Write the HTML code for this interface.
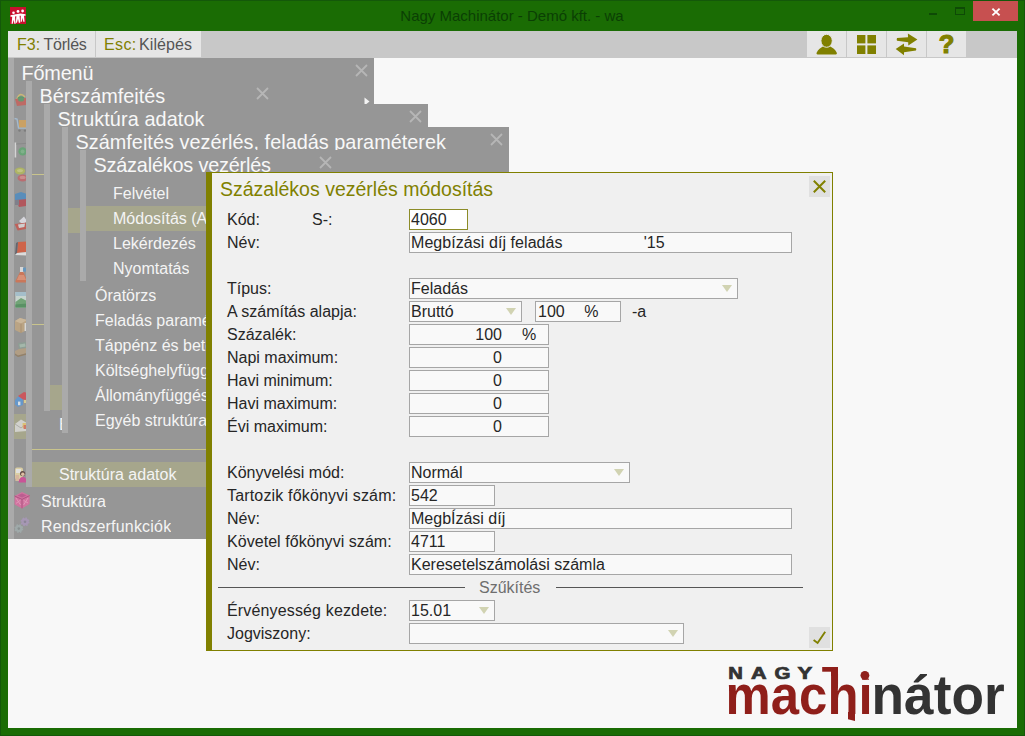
<!DOCTYPE html>
<html lang="hu">
<head>
<meta charset="utf-8">
<title>Nagy Machinátor - Demó kft. - wa</title>
<style>
*{box-sizing:border-box;margin:0;padding:0}
html,body{width:1025px;height:736px;overflow:hidden}
body{position:relative;background:#1a6c04;font-family:"Liberation Sans",Arial,sans-serif;font-size:16px;color:#262626}
.abs{position:absolute}
#frame{position:absolute;left:0;top:0;width:1025px;height:736px;border:1px solid #14580a;}
#client{position:absolute;left:8px;top:31px;width:1009px;height:697px;background:#f8f8f8}
#toolbar{position:absolute;left:0;top:0;width:1009px;height:27px;background:#c8c8c8}
.tbtn{position:absolute;top:0;height:26px;background:#e6e6e6;line-height:27px;white-space:nowrap;color:#555}
.tbtn b{font-weight:normal;color:#808000}
.panel{position:absolute;background:#969696}
.stripe{position:absolute;left:0;top:0;width:6px;background:#aaaaaa}
.ptitle{position:absolute;top:4px;margin-left:-0.5px;font-size:19.85px;line-height:23px;color:#f8f8f8;white-space:nowrap}
.mi{position:absolute;height:25px;line-height:25px;color:#f4f4f4;white-space:nowrap;overflow:hidden}
.hl{background:#a6a68c}
.px{position:absolute;width:13px;height:13px}
.sep{position:absolute;height:1px;background:#c9c48c}
#dlg{position:absolute;left:198px;top:141px;width:627px;height:479px;background:#f0f0f0;border:1px solid #808000;border-left:6px solid #808000}
.lbl{position:absolute;left:21px;height:21px;line-height:21px;white-space:nowrap}
.fld{position:absolute;height:21px;line-height:19px;border:1px solid #a6a6a6;background:#f9f9f9;padding-left:1px;white-space:pre;overflow:hidden}
.arr{position:absolute;width:0;height:0;border-left:5.5px solid transparent;border-right:5.5px solid transparent;border-top:7px solid #d1d3b2}
</style>
</head>
<body>
<div id="frame"></div>
<!-- title bar -->
<svg class="abs" style="left:10px;top:7px" width="16" height="17" viewBox="0 0 16 17">
<rect width="16" height="17" fill="#c8102e"/>
<g fill="#fff" transform="translate(0,0.8)"><circle cx="3.5" cy="5" r="1.3"/><circle cx="8" cy="3.6" r="1.4"/><circle cx="12.6" cy="3.2" r="1.4"/>
<path d="M0.5 7.5 L6 6.5 L10.5 5.6 L15.5 6.5 L15.5 8 L14 8 L14.6 14 L13.3 14 L12.6 10 L11.8 14 L10.6 14 L10.8 8 L9.6 8 L10.2 15 L8.8 15 L8 11 L7 15 L5.8 15 L6.4 8.4 L5 8.8 L5.6 16 L4.4 16 L3.6 12 L2.8 16 L1.6 16 L2.2 9 L0.5 9 Z"/></g>
</svg>
<div class="abs" id="wtitle" style="left:399px;top:4px;width:226px;height:24px;line-height:24px;font-size:15px;color:#0b3f04;white-space:nowrap;text-align:center">Nagy Machinátor - Demó kft. - wa</div>
<div class="abs" style="left:929px;top:13px;width:8px;height:2px;background:#0e4a06"></div>
<div class="abs" style="left:955px;top:7px;width:10px;height:8px;border:1px solid #0e4a06;border-top-width:2px"></div>
<div class="abs" style="left:973px;top:1px;width:45px;height:20px;background:#c75050"></div>
<svg class="abs" style="left:991px;top:7px" width="10" height="10" viewBox="0 0 10 10"><path d="M1.4 1.6 L8.6 8.4 M8.6 1.6 L1.4 8.4" stroke="#fff" stroke-width="1.9" fill="none"/></svg>

<div id="client">
 <div id="toolbar">
  <div class="tbtn" style="left:0;width:87px;padding-left:9px"><b>F3:</b> <span style="margin-left:-1px;letter-spacing:-0.25px">Törlés</span></div>
  <div class="tbtn" style="left:88px;width:105px;padding-left:8px"><b style="letter-spacing:0.4px">Esc:</b> <span style="margin-left:-2.2px;letter-spacing:0.1px">Kilépés</span></div>
  <div class="tbtn" style="left:799px;width:39px"></div>
  <div class="tbtn" style="left:839px;width:39px"></div>
  <div class="tbtn" style="left:879px;width:39px"></div>
  <div class="tbtn" style="left:919px;width:39px"></div>
  <!-- user -->
  <svg class="abs" style="left:808px;top:3px" width="22" height="21" viewBox="0 0 22 21"><path d="M1.6 20.4 Q0 20.4 0.6 18.8 C2 15 5 13.4 7 12.4 L14.2 12.4 C16.4 13.4 19.4 15 20.8 18.8 Q21.4 20.4 19.8 20.4 Z" fill="#808000"/><ellipse cx="10.6" cy="6.8" rx="5.7" ry="6.5" fill="#808000" stroke="#e6e6e6" stroke-width="1"/></svg>
  <!-- grid -->
  <svg class="abs" style="left:849px;top:4px" width="19" height="19" viewBox="0 0 19 19"><g fill="#808000"><rect x="0" y="0" width="8.4" height="8.4"/><rect x="10.4" y="0" width="8.6" height="8.4"/><rect x="0" y="10.4" width="8.4" height="8.6"/><rect x="10.4" y="10.4" width="8.6" height="8.6"/></g></svg>
  <!-- arrows -->
  <svg class="abs" style="left:886px;top:2px" width="25" height="24" viewBox="0 0 25 24"><g fill="#808000"><path d="M3 5 Q2.4 6.4 3 7.8 L14.2 9.2 L14.3 12.4 L23.4 6.4 L13.9 0.4 L14 4.2 Z"/><path d="M22 15.2 Q22.6 16.3 22 17.4 L10 19.2 L10 22.2 L1.7 16.1 L10 10.5 L10 13.6 Z"/></g></svg>
  <div class="abs" style="left:919px;top:0;width:39px;height:27px;line-height:27px;text-align:center;font-weight:bold;font-size:25.5px;color:#808000;-webkit-text-stroke:1.2px #808000">?</div>
 </div>

 <!-- MENUS -->
 <div class="panel" id="p0" style="left:0;top:27px;width:366px;height:481px">
  <div class="stripe" style="height:481px"></div>
  <div class="ptitle" style="left:14px;letter-spacing:-0.15px">Főmenü</div>
  <svg class="px" style="left:347px;top:6px" viewBox="0 0 13 13"><path d="M1 1 L12 12 M12 1 L1 12" stroke="#b6b6b6" stroke-width="1.8" fill="none"/></svg>
  <div class="mi hl" style="left:6px;top:356px;width:12px"></div>
  <svg class="abs" style="left:6px;top:33px;opacity:0.8" width="16" height="18" viewBox="0 0 16 18"><path d="M3 8 Q6 0 11 6" stroke="#d8c070" stroke-width="1.6" fill="none"/><ellipse cx="7" cy="8" rx="3.6" ry="2.8" fill="#4f9a62"/><path d="M1 8 L13 7 L12 14 L3 15 Z" fill="#c8605a"/><ellipse cx="7" cy="8.4" rx="3" ry="2" fill="#5a9a6a"/></svg>
  <svg class="abs" style="left:6px;top:58px;opacity:0.8" width="16" height="18" viewBox="0 0 16 18"><path d="M0.5 2.5 L3 3 L4.5 12 L12 12" stroke="#a8c4dc" stroke-width="1.4" fill="none"/><rect x="5" y="4" width="8" height="7.4" fill="#d8a458"/><circle cx="5.5" cy="14.6" r="1.2" fill="#777"/><circle cx="11" cy="14.6" r="1.2" fill="#777"/></svg>
  <svg class="abs" style="left:6px;top:83px;opacity:0.8" width="16" height="18" viewBox="0 0 16 18"><rect x="0.6" y="1.5" width="1.6" height="15" fill="#e4e4e4"/><path d="M2 3 L12 2.4" stroke="#888" stroke-width="1"/><circle cx="8.6" cy="10.4" r="4.2" fill="#5fa870"/><circle cx="8.6" cy="10.4" r="2" fill="#7ab888"/></svg>
  <svg class="abs" style="left:6px;top:108px;opacity:0.8" width="16" height="18" viewBox="0 0 16 18"><ellipse cx="6" cy="5" rx="5.2" ry="3.4" fill="#b4bc58"/><ellipse cx="6" cy="4.6" rx="3" ry="1.6" fill="#ccd080"/><ellipse cx="8.6" cy="12" rx="5" ry="3.6" fill="#c46468"/><ellipse cx="8.6" cy="11.4" rx="3" ry="1.6" fill="#d88c8c"/></svg>
  <svg class="abs" style="left:6px;top:133px;opacity:0.8" width="16" height="18" viewBox="0 0 16 18"><path d="M1 3 L7 1 L13 3 L13 9 L1 9 Z" fill="#4a8cc4"/><path d="M2 9 L13 8 L12 15 L5 16 Z" fill="#b84850"/><rect x="1" y="9" width="4" height="5" fill="#7a7a88"/></svg>
  <svg class="abs" style="left:6px;top:158px;opacity:0.8" width="16" height="18" viewBox="0 0 16 18"><path d="M5 5 L10 0.6 L13 5 L9 9 Z" fill="#e6e6ee"/><path d="M0.6 8 L13 6.4 L12 13 L3.6 14.6 Z" fill="#c8544c"/><path d="M4 8.6 L11 7.6 L10.4 11 L5 12 Z" fill="#ddd"/></svg>
  <svg class="abs" style="left:6px;top:183px;opacity:0.8" width="16" height="18" viewBox="0 0 16 18"><path d="M4 1 L13 0.6 L13 11 L3 12 Z" fill="#dc5838"/><path d="M2 2 L4 1 L3 12 L1 14 Z" fill="#5a5a64"/><path d="M1 14 L3 12 L13 11 L13 14.6 Z" fill="#eee"/></svg>
  <svg class="abs" style="left:6px;top:208px;opacity:0.8" width="16" height="18" viewBox="0 0 16 18"><rect x="6" y="1" width="3.4" height="7" fill="#e8e8e8"/><rect x="9" y="1.6" width="3.4" height="4" fill="#5a98c8"/><path d="M6 6 L9.4 6 L13.4 15 Q13.4 16.4 12 16.4 L2.6 16.4 Q1 16.4 1.4 15 Z" fill="#d8704c"/><path d="M5 9 L10 9 L12 14 L3 14 Z" fill="#e89070"/></svg>
  <svg class="abs" style="left:6px;top:233px;opacity:0.8" width="16" height="18" viewBox="0 0 16 18"><rect x="1.4" y="1" width="11.6" height="15.6" fill="#d4e4dc"/><rect x="1.4" y="1" width="11.6" height="4" fill="#a8c8d8"/><path d="M1.4 11 L7 7 L13 10 L13 16.6 L1.4 16.6 Z" fill="#6aa870"/><path d="M1.4 13.6 L13 12.6 L13 16.6 L1.4 16.6 Z" fill="#4a9058"/></svg>
  <svg class="abs" style="left:6px;top:258px;opacity:0.8" width="16" height="18" viewBox="0 0 16 18"><path d="M1 5 L6 2 L13 4 L13 14 L7 17 L1 14 Z" fill="#c4a880"/><path d="M1 5 L7 7.6 L13 4 L6 2 Z" fill="#d8c09c"/><path d="M7 7.6 L7 17" stroke="#a88c64" stroke-width="0.8"/><rect x="10.6" y="7" width="2.4" height="8" fill="#e8e8e8"/></svg>
  <svg class="abs" style="left:6px;top:283px;opacity:0.8" width="16" height="18" viewBox="0 0 16 18"><path d="M4 2 L12 1 L13 7 L5 8 Z" fill="#8ca094"/><path d="M5.4 3.4 L11 2.6 L11.6 5.6 L6 6.4 Z" fill="#a8c0b0"/><path d="M1 10 L5 8 L13 7 L13 12 L4 14.6 L1 12.6 Z" fill="#b8a080"/><path d="M1 12.6 L4 14.6 L13 12 L13 13.4 L4 16 L1 14 Z" fill="#947c5c"/></svg>
  <svg class="abs" style="left:6px;top:333px;opacity:0.8" width="16" height="18" viewBox="0 0 16 18"><path d="M1 9 L4.6 5 L9 8 L9 14 L4 16 L1 13.6 Z" fill="#5a98d8"/><path d="M4 5 L10 1 L13.4 2 L13 9 L9 8.6 Z" fill="#d84850"/><rect x="4" y="10.6" width="2.4" height="3.6" fill="#e8f0f8"/><rect x="10" y="9" width="3" height="3" fill="#e8d890"/></svg>
  <svg class="abs" style="left:6px;top:358px;opacity:0.8" width="16" height="18" viewBox="0 0 16 18"><path d="M1 8 L7 3.6 L13 7 L13 15 L1 16 Z" fill="#dcdcdc"/><path d="M1 8 L7 12 L13 7" stroke="#aaa" stroke-width="0.9" fill="none"/><rect x="8.6" y="7" width="4.4" height="5" fill="#e8c870"/><rect x="9.6" y="9" width="3.4" height="4" fill="#d87060"/></svg>
  <svg class="abs" style="left:6px;top:408px;opacity:0.8" width="16" height="18" viewBox="0 0 16 18"><rect x="1" y="1.6" width="8" height="12" rx="2" fill="#ecdca8"/><rect x="2" y="3" width="5" height="4" fill="#f4f4f0"/><circle cx="8.6" cy="7.6" r="2.6" fill="#5a3c34"/><circle cx="8.8" cy="8.2" r="1.7" fill="#f0c8a8"/><path d="M4.6 16.6 Q5 11 8.8 11 Q12.6 11 13 16.6 Z" fill="#d84498"/><rect x="1.4" y="9" width="3.6" height="6" fill="#e8c0a0"/></svg>
  <svg class="abs" style="left:6px;top:433px;opacity:0.9" width="16" height="18" viewBox="0 0 16 18"><path d="M0.6 5 L8 1 L15.6 4.6 L15.6 13 L8 17.4 L0.6 13.6 Z" fill="#d870a0"/><path d="M0.6 5 L8 8.4 L15.6 4.6 M8 8.4 L8 17.4" stroke="#b04c80" stroke-width="1" fill="none"/><path d="M2 7 L6.6 14 M6.6 9 L2 12.4 M9.6 9.4 L14 12 M14 7 L9.6 14" stroke="#e898bc" stroke-width="1" fill="none"/><path d="M3.6 4.6 L8 2.6 L12.6 4.6 L8 6.6 Z" fill="#c05890"/></svg>
  <svg class="abs" style="left:6px;top:458px;opacity:0.9" width="16" height="18" viewBox="0 0 16 18"><circle cx="11" cy="5.8" r="3.4" fill="#a898b8" stroke="#a898b8" stroke-width="2.2" stroke-dasharray="1.5 1.17"/><circle cx="11" cy="5.8" r="3.4" fill="#a898b8"/><circle cx="11" cy="5.8" r="1.3" fill="#8c8498"/><circle cx="4.8" cy="12.6" r="3.4" fill="#a0acac" stroke="#a0acac" stroke-width="2.2" stroke-dasharray="1.5 1.17"/><circle cx="4.8" cy="12.6" r="3.4" fill="#a0acac"/><circle cx="4.8" cy="12.6" r="1.3" fill="#889090"/></svg>
  <div class="mi" style="left:33px;top:431px">Struktúra</div>
  <div class="mi" style="left:33px;top:456px;letter-spacing:0.2px">Rendszerfunkciók</div>
 </div>
 <div class="panel" id="p1" style="left:18px;top:50px;width:250px;height:406px">
  <div class="stripe" style="height:406px"></div>
  <div class="ptitle" style="left:14px">Bérszámfejtés</div>
  <svg class="px" style="left:230px;top:6px" viewBox="0 0 13 13"><path d="M1 1 L12 12 M12 1 L1 12" stroke="#b6b6b6" stroke-width="1.8" fill="none"/></svg>
  <div class="sep" style="left:6px;top:93px;width:244px"></div>
  <div class="sep" style="left:6px;top:243px;width:244px"></div>
  <div class="mi" style="left:33px;top:331px">Bérszámfejtés</div>
  <div class="sep" style="left:6px;top:368px;width:244px"></div>
  <div class="mi hl" style="left:6px;top:381px;width:244px;padding-left:27px">Struktúra adatok</div>
 </div>
 <svg class="abs" style="left:356px;top:66px" width="6" height="9" viewBox="0 0 6 9"><path d="M0.5 0.5 L5.5 4.5 L0.5 8.5 Z" fill="#f4f4f4"/></svg>
 <div class="panel" id="p2" style="left:36px;top:73px;width:384px;height:307px">
  <div class="stripe" style="height:307px"></div>
  <div class="ptitle" style="left:14px;letter-spacing:0.09px">Struktúra adatok</div>
  <svg class="px" style="left:365px;top:6px" viewBox="0 0 13 13"><path d="M1 1 L12 12 M12 1 L1 12" stroke="#b6b6b6" stroke-width="1.8" fill="none"/></svg>
  <div class="mi hl" style="left:6px;top:281px;width:378px;padding-left:27px">Számfejtés vezérlés, feladás paraméterek</div>
 </div>
 <div class="panel" id="p3" style="left:54px;top:96px;width:447px;height:306px">
  <div class="stripe" style="height:306px"></div>
  <div class="ptitle" style="left:14px;letter-spacing:0.025px">Számfejtés vezérlés, feladás paraméterek</div>
  <svg class="px" style="left:428px;top:6px" viewBox="0 0 13 13"><path d="M1 1 L12 12 M12 1 L1 12" stroke="#b6b6b6" stroke-width="1.8" fill="none"/></svg>
  <div class="mi hl" style="left:6px;top:81px;width:441px;padding-left:27px">Százalékos vezérlés</div>
  <div class="mi" style="left:33px;top:156px">Óratörzs</div>
  <div class="mi" style="left:33px;top:181px">Feladás paraméterek</div>
  <div class="mi" style="left:33px;top:206px">Táppénz és betegszabadság</div>
  <div class="mi" style="left:33px;top:231px">Költséghelyfüggő vezérlés</div>
  <div class="mi" style="left:33px;top:256px">Állományfüggés</div>
  <div class="mi" style="left:33px;top:281px">Egyéb struktúra adatok</div>
 </div>
 <div class="panel" id="p4" style="left:72px;top:119px;width:258px;height:131px">
  <div class="stripe" style="height:131px"></div>
  <div class="ptitle" style="left:14px;letter-spacing:-0.19px">Százalékos vezérlés</div>
  <svg class="px" style="left:239px;top:6px" viewBox="0 0 13 13"><path d="M1 1 L12 12 M12 1 L1 12" stroke="#b6b6b6" stroke-width="1.8" fill="none"/></svg>
  <div class="mi" style="left:33px;top:31px">Felvétel</div>
  <div class="mi hl" style="left:6px;top:56px;width:252px;padding-left:27px">Módosítás (A</div>
  <div class="mi" style="left:33px;top:81px">Lekérdezés</div>
  <div class="mi" style="left:33px;top:106px">Nyomtatás</div>
 </div>

 <!-- DIALOG -->
 <div id="dlg">
  <div class="abs" style="left:8px;top:4px;font-size:19.5px;line-height:24px;color:#808000;white-space:nowrap">Százalékos vezérlés módosítás</div>
  <div class="abs" style="left:597px;top:3px;width:21px;height:21px;background:#e0e0e0"></div>
  <svg class="abs" style="left:601px;top:7px" width="13" height="13" viewBox="0 0 13 13"><path d="M0.8 0.8 L12.2 12.2 M12.2 0.8 L0.8 12.2" stroke="#808000" stroke-width="2" fill="none"/></svg>
  <div class="lbl" style="left:15px;top:36px">Kód:</div>
  <div class="lbl" style="left:15px;top:59px">Név:</div>
  <div class="lbl" style="left:15px;top:105px">Típus:</div>
  <div class="lbl" style="left:15px;top:128px">A számítás alapja:</div>
  <div class="lbl" style="left:15px;top:151px">Százalék:</div>
  <div class="lbl" style="left:15px;top:174px">Napi maximum:</div>
  <div class="lbl" style="left:15px;top:197px">Havi minimum:</div>
  <div class="lbl" style="left:15px;top:220px">Havi maximum:</div>
  <div class="lbl" style="left:15px;top:243px">Évi maximum:</div>
  <div class="lbl" style="left:15px;top:289px">Könyvelési mód:</div>
  <div class="lbl" style="left:15px;top:312px;letter-spacing:0.17px">Tartozik főkönyvi szám:</div>
  <div class="lbl" style="left:15px;top:335px">Név:</div>
  <div class="lbl" style="left:15px;top:358px;letter-spacing:0.05px">Követel főkönyvi szám:</div>
  <div class="lbl" style="left:15px;top:381px">Név:</div>
  <div class="lbl" style="left:15px;top:427px;letter-spacing:0.15px">Érvényesség kezdete:</div>
  <div class="lbl" style="left:15px;top:450px">Jogviszony:</div>
  <div class="lbl" style="left:100px;top:36px">S-:</div>
  <div class="fld" style="left:197px;top:36px;width:59px;border-color:#8c8c28;background:#fff">4060</div>
  <div class="fld" style="left:197px;top:59px;width:383px;letter-spacing:0.06px">Megbízási díj feladás                  '15</div>
  <div class="fld" style="left:197px;top:105px;width:329px">Feladás</div>
  <div class="arr" style="left:510px;top:112px"></div>
  <div class="fld" style="left:197px;top:128px;width:113px">Bruttó</div>
  <div class="arr" style="left:294px;top:135px"></div>
  <div class="fld" style="left:323px;top:128px;width:86px"><span style="margin-left:1px">100</span><span style="margin-left:19.6px">%</span></div>
  <div class="lbl" style="left:420px;top:128px">-a</div>
  <div class="fld" style="left:197px;top:151px;width:140px;position:absolute"><span class="abs" style="right:46px">100</span><span class="abs" style="left:112px">%</span></div>
  <div class="fld" style="left:197px;top:174px;width:140px"><span class="abs" style="right:46px">0</span></div>
  <div class="fld" style="left:197px;top:197px;width:140px"><span class="abs" style="right:46px">0</span></div>
  <div class="fld" style="left:197px;top:220px;width:140px"><span class="abs" style="right:46px">0</span></div>
  <div class="fld" style="left:197px;top:243px;width:140px"><span class="abs" style="right:46px">0</span></div>
  <div class="fld" style="left:197px;top:289px;width:221px">Normál</div>
  <div class="arr" style="left:402px;top:296px"></div>
  <div class="fld" style="left:197px;top:312px;width:86px">542</div>
  <div class="fld" style="left:197px;top:335px;width:383px">MegbÍzási díj</div>
  <div class="fld" style="left:197px;top:358px;width:86px">4711</div>
  <div class="fld" style="left:197px;top:381px;width:383px">Keresetelszámolási számla</div>
  <div class="abs" style="left:6px;top:414px;width:247px;height:1px;background:#555"></div>
  <div class="abs" style="left:344px;top:414px;width:247px;height:1px;background:#555"></div>
  <div class="abs" style="left:267px;top:404px;height:21px;line-height:21px;color:#6e6e6e">Szűkítés</div>
  <div class="fld" style="left:197px;top:427px;width:86px">15.01</div>
  <div class="arr" style="left:267px;top:434px"></div>
  <div class="fld" style="left:197px;top:450px;width:275px"></div>
  <div class="arr" style="left:456px;top:457px"></div>
  <div class="abs" style="left:597px;top:454px;width:21px;height:21px;background:#e0e0e0"></div>
  <svg class="abs" style="left:597px;top:454px" width="21" height="21" viewBox="0 0 21 21"><path d="M4.6 13 L8.6 16 L16.2 4.8" stroke="#808000" stroke-width="1.9" fill="none"/></svg>
 </div>

 <!-- LOGO -->
 <svg class="abs" style="left:712px;top:625px" width="300" height="72" viewBox="0 0 300 72">
  <g font-family="Liberation Sans, Arial, sans-serif" font-weight="bold">
  <g font-size="15.8" fill="#333" stroke="#333" stroke-width="0.7">
   <text x="8.2" y="23" textLength="14.6" lengthAdjust="spacingAndGlyphs">N</text>
   <text x="31" y="23" textLength="15.6" lengthAdjust="spacingAndGlyphs">A</text>
   <text x="54.6" y="23" textLength="16" lengthAdjust="spacingAndGlyphs">G</text>
   <text x="77.4" y="23" textLength="14.8" lengthAdjust="spacingAndGlyphs">Y</text>
  </g>
  <text x="5.6" y="57.5" font-size="56" fill="#8f1f1a" textLength="147" lengthAdjust="spacingAndGlyphs">machi</text>
  <text x="151.6" y="57.5" font-size="56" fill="#333" textLength="133" lengthAdjust="spacingAndGlyphs">nátor</text>
  </g>
  <g fill="#8f1f1a"><rect x="102.2" y="11" width="15.8" height="4.7"/><rect x="111" y="11" width="7" height="9"/><path d="M128 56 L135 56 L135 65 L128 63.2 Z"/></g>
  <rect x="140" y="8" width="11" height="14.6" fill="#f8f8f8"/><circle cx="144.9" cy="19.3" r="4.4" fill="#8f1f1a"/>
 </svg>
</div>
</body>
</html>
